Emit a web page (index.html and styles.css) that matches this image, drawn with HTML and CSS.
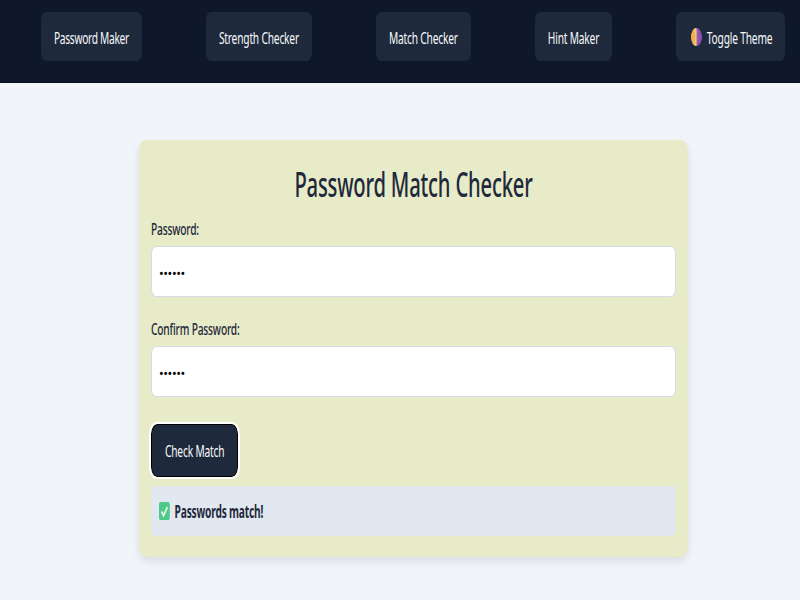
FILE: index.html
```html
<!DOCTYPE html>
<html lang="en">
<head>
    <meta charset="UTF-8">
    <meta name="viewport" content="width=device-width, initial-scale=1.0">
    <title>Password Match Checker</title>
    <link rel="stylesheet" href="styles.css">
</head>
<body>

<nav class="navbar">
    <a class="nav-btn"><span class="tall">Password Maker</span></a>
    <a class="nav-btn"><span class="tall">Strength Checker</span></a>
    <a class="nav-btn"><span class="tall">Match Checker</span></a>
    <a class="nav-btn"><span class="tall">Hint Maker</span></a>
    <button class="nav-btn theme-btn">
        <svg class="emoji" viewBox="0 0 18 18" preserveAspectRatio="none">
            <circle cx="9" cy="9" r="9" fill="#9a5fc0"/>
            <path d="M9 0a9 9 0 0 0 0 18z" fill="#eeb04e"/>
            <path d="M9 0a9 9 0 0 0-5 1.5 12 12 0 0 1 0 15A9 9 0 0 0 9 18z" fill="#f5c863"/>
            <path d="M9 0a12 12 0 0 1 0 18 9 9 0 0 0 0-18z" fill="#8a4fb5"/>
        </svg>
        <span class="tall">Toggle Theme</span>
    </button>
</nav>

<main class="card">
    <h1><span class="tall">Password Match Checker</span></h1>

    <div class="field">
        <label for="pass1"><span class="tall">Password:</span></label>
        <input id="pass1" type="password" value="123456">
    </div>

    <div class="field">
        <label for="pass2"><span class="tall">Confirm Password:</span></label>
        <input id="pass2" type="password" value="123456">
    </div>

    <button class="check-btn"><span class="tall">Check Match</span></button>

    <div class="result">
        <svg class="emoji" viewBox="0 0 18 18" preserveAspectRatio="none">
            <rect width="18" height="18" rx="2.5" fill="#4fc98a"/>
            <path d="M4 9.5l3.5 4L14 5" fill="none" stroke="#e8f8ee" stroke-width="2.4"/>
        </svg>
        <span class="tall">Passwords match!</span>
    </div>
</main>

</body>
</html>
```

FILE: styles.css
```css
html, body {
    margin: 0;
    height: 100%;
    overflow: hidden;
}
body {
    background: #f1f5f9;
    font-family: "Noto Sans", sans-serif;
    font-size: 10.2px;
    letter-spacing: -0.18px;
    color: #1e293b;
}
/* the shot is squeezed sideways, so text is narrow and tall */
.tall {
    display: inline-block;
    line-height: 1;
    transform: scaleY(1.667);
}
.navbar {
    display: flex;
    gap: 64px;
    box-sizing: border-box;
    height: 83px;
    padding: 12px 0 0 41px;
    background: #0f172a;
    border-bottom: 1px solid #0a0f1c;
}
.nav-btn {
    display: flex;
    align-items: center;
    gap: 4.8px;
    box-sizing: border-box;
    height: 49px;
    padding: 2px 13px 0;
    background: #1e293b;
    color: #f8fafc;
    border: none;
    border-radius: 5px / 8px;
    font: inherit;
    letter-spacing: inherit;
}
.nav-btn:first-child {
    letter-spacing: -0.3px;
}
.theme-btn .emoji {
    margin: -2px 0 0 2px;
}
.emoji {
    flex: none;
    width: 10.8px;
    height: 18px;
}
.card {
    box-sizing: border-box;
    width: 549px;
    height: 417px;
    margin: 57px 0 0 139px;
    padding: 20px 12px 21px;
    background: #e8ebc8;
    border-radius: 7px / 12px;
    box-shadow: 0 4px 8px rgba(0, 0, 0, 0.1);
}
h1 {
    margin: 0 0 8px;
    font-size: 20.2px;
    font-weight: 500;
    line-height: 49px;
    text-align: center;
}
.field {
    margin-bottom: 20px;
}
label {
    display: block;
    height: 24px;
    margin-bottom: 5px;
    font-weight: 500;
    line-height: 22px;
}
input {
    display: block;
    box-sizing: border-box;
    width: 100%;
    height: 51px;
    padding: 3px 7px 0;
    background: white;
    border: 1px solid #d5dce6;
    border-radius: 5px / 8px;
    font-size: 12.5px;
    font-family: inherit;
    letter-spacing: -0.4px;
}
.check-btn {
    display: block;
    box-sizing: border-box;
    height: 53px;
    margin-top: 27px;
    padding: 0 13px 2px;
    background: #1e293b;
    color: #f8fafc;
    border: 1px solid black;
    border-radius: 6px / 10px;
    outline: 2px solid white;
    font: inherit;
    letter-spacing: inherit;
}
.result {
    display: flex;
    align-items: center;
    gap: 4.8px;
    height: 50px;
    margin-top: 9px;
    padding: 0 8px;
    background: #e2e8f0;
    border-radius: 4px / 6px;
    font-weight: 700;
}
```
